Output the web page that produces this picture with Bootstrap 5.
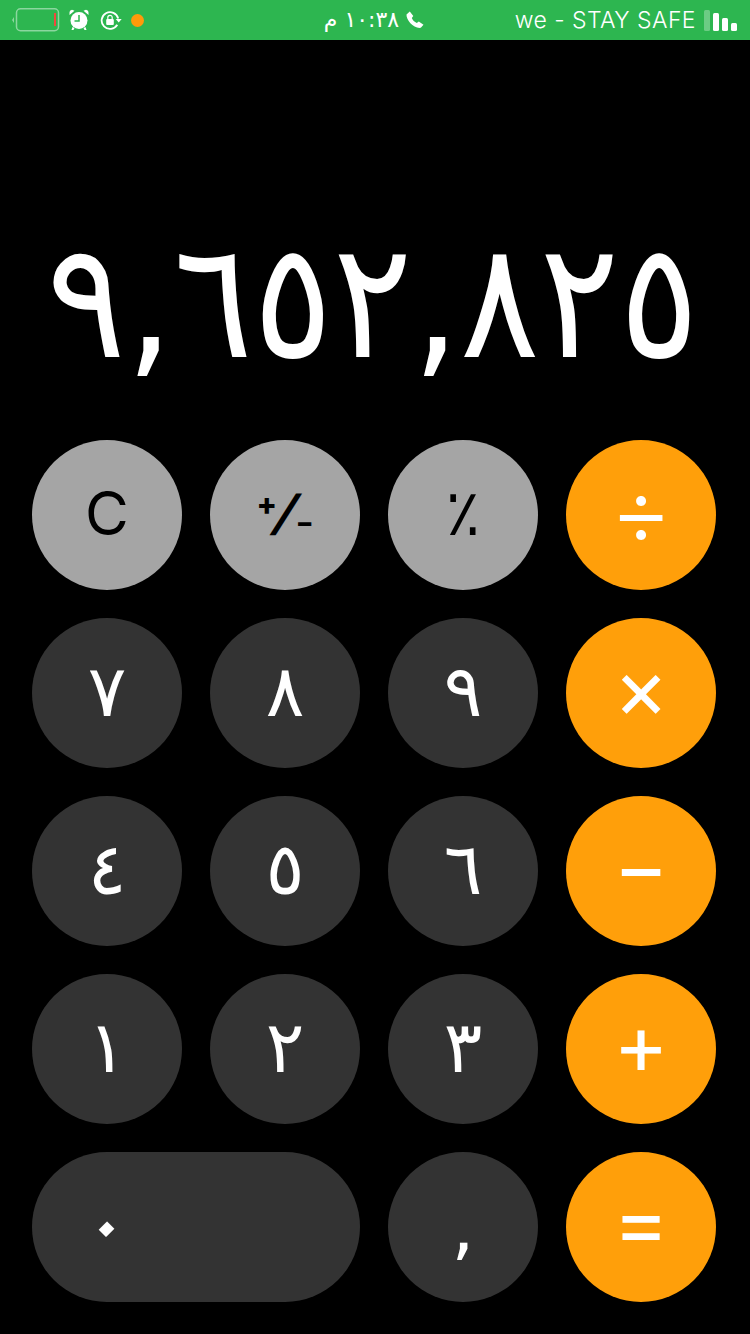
<!doctype html>
<html lang="ar">
<head>
<meta charset="utf-8">
<link href="https://cdn.jsdelivr.net/npm/bootstrap@5.3.0/dist/css/bootstrap.min.css" rel="stylesheet">
<style>
html,body{background:#000;margin:0;height:1334px;overflow:hidden}
.shell{width:750px;height:1334px;background:#000;font-family:"DejaVu Sans","Noto Sans",sans-serif}
.sbar{height:40px;background:#2db650;color:#fff;padding:0 13px 0 11px}
.sb-left,.sb-right{width:280px}
.sb-left{gap:9px}
.lock-ic{margin-left:2px}
.sb-time{font-size:22px;line-height:40px;gap:7px}
.sb-carrier{font-family:"Inter","Liberation Sans",sans-serif;font-weight:300;font-size:23px;line-height:40px;letter-spacing:.45px;color:#fff}
.dot{width:13px;height:13px;border-radius:50%;background:#ff9a0a}
.readout{height:400px;padding:0 51px 58px 40px;color:#fff}
.readout-val{font-size:148.500px;line-height:1;white-space:nowrap;transform:scaleY(1.09);transform-origin:50% 100%}
.keys{display:grid;grid-template-columns:repeat(4,150px);grid-auto-rows:150px;gap:28px;padding-left:32px}
.key{border:0;padding:0 0 5px;border-radius:75px;font-size:72px;line-height:1;color:#fff;background:#333;display:flex;align-items:center;justify-content:center;font-family:"DejaVu Sans",sans-serif}
.key-fn{background:#a5a5a5;color:#000}
.key-op{background:#ff9f0a;font-family:"Inter","Liberation Sans",sans-serif;font-weight:400;font-size:84px;padding-bottom:10px}
.key-times{font-size:84px;font-weight:400}
.key-div{font-size:96px;font-weight:300;padding-bottom:11px}
.key-wide{grid-column:span 2;justify-content:flex-start;padding-left:53px}
.key-comma{padding-bottom:0}
.key-c{font-family:"Inter","Liberation Sans",sans-serif;font-weight:400;font-size:60px}
.key-pm{font-family:"Inter","Liberation Sans",sans-serif;font-size:48px;font-weight:700}
.pm-a,.pm-b{font-weight:800;position:relative}
.pm-a{font-size:30px;top:-9px}
.pm-b{font-size:26px;top:10px}
.pm-s{display:inline-block;transform:skewX(-20deg)}
.key-pct{font-size:64px}
.zero-dot{display:inline-block;transform:rotate(45deg);font-size:96px;line-height:1}
</style>
</head>
<body>
<div class="shell">
  <div class="sbar d-flex align-items-center justify-content-between">
    <div class="sb-left d-flex align-items-center">
      <svg width="49" height="24" viewBox="0 0 49 24"><path d="M3 9 1 12l2 3z" fill="#fff" opacity=".45"/><rect x="5.500" y=".75" width="42" height="22" rx="4" fill="none" stroke="#fff" stroke-opacity=".45" stroke-width="1.500"/><rect x="43" y="5" width="2" height="13" fill="#f0483e"/></svg>
      <svg width="20" height="22" viewBox="0 0 20 22"><circle cx="10" cy="11.500" r="8.500" fill="#fff"/><path d="M10 6V12H5.500" fill="none" stroke="#2db650" stroke-width="1.500"/><path d="M.5 6 5.500 1.800 3 .8 1 1.800.5 3.500zM19.500 6 14.500 1.800 17 .8 19 1.800l.5 1.700zM3.500 18 2.500 21h2l1-2zM16.500 18l1 3h-2l-1-2z" fill="#fff"/></svg>
      <svg class="lock-ic" width="22" height="20" viewBox="0 0 22 20"><path d="M18.200 8.500A8.400 8.400 0 1 0 17.300 14.800" fill="none" stroke="#fff" stroke-width="1.800"/><path d="M15.700 9h6l-3 3.500z" fill="#fff"/><rect x="6.200" y="9" width="7.600" height="6" rx="1" fill="#fff"/><path d="M7.800 9V7.500a2.200 2.200 0 0 1 4.400 0V9" fill="none" stroke="#fff" stroke-width="1.200"/></svg>
      <span class="dot"></span>
    </div>
    <div class="sb-time d-flex align-items-center"><span dir="rtl">١٠:٣٨ م</span>
      <svg width="18" height="18" viewBox="0 0 18 18"><path d="M.5 3.500 3.800.5 7.300 5 5.800 7c.8 2 2.700 4 5 5l2-1.500 4.700 3.300-2.700 3C8 18 0 9 .5 3.500z" fill="#fff"/></svg>
    </div>
    <div class="sb-right d-flex align-items-center justify-content-end gap-2">
      <span class="sb-carrier">we - STAY SAFE</span>
      <svg width="33" height="21" viewBox="0 0 33 21"><rect x="0" y="0" width="6" height="21" rx="1.500" fill="#fff" opacity=".3"/><rect x="9" y="3" width="6" height="18" rx="1.500" fill="#fff"/><rect x="18" y="8" width="6" height="13" rx="1.500" fill="#fff"/><rect x="27" y="13" width="6" height="8" rx="1.500" fill="#fff"/></svg>
    </div>
  </div>
  <div class="readout d-flex align-items-end justify-content-end"><div class="readout-val" dir="ltr">٩,٦٥٢,٨٢٥</div></div>
  <div class="keys">
    <button class="key key-fn key-c">C</button>
    <button class="key key-fn key-pm"><span class="pm-a">+</span><span class="pm-s">/</span><span class="pm-b">−</span></button>
    <button class="key key-fn key-pct">٪</button>
    <button class="key key-op key-div">÷</button>
    <button class="key">٧</button><button class="key">٨</button><button class="key">٩</button>
    <button class="key key-op key-times">×</button>
    <button class="key">٤</button><button class="key">٥</button><button class="key">٦</button>
    <button class="key key-op">−</button>
    <button class="key">١</button><button class="key">٢</button><button class="key">٣</button>
    <button class="key key-op">+</button>
    <button class="key key-wide"><span class="zero-dot">٠</span></button><button class="key key-comma">,</button>
    <button class="key key-op">=</button>
  </div>
</div>
<script src="https://cdn.jsdelivr.net/npm/bootstrap@5.3.0/dist/js/bootstrap.bundle.min.js"></script>
</body>
</html>
